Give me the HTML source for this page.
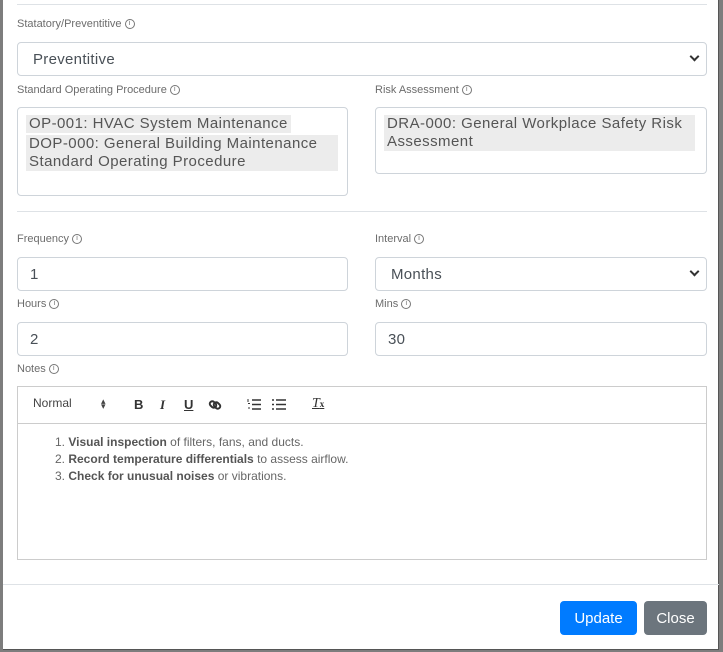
<!DOCTYPE html><html><head><style>
*{box-sizing:border-box;margin:0;padding:0}
body{width:723px;height:652px;background:#7d7d7d;position:relative;overflow:hidden;font-family:"Liberation Sans",sans-serif}
.m{position:absolute;left:3px;top:0;width:716px;height:650px;background:#fff;border-right:1px solid #555;border-bottom:1px solid #555}
.a{position:absolute}
.hr{position:absolute;height:1px;background:#dee2e6}
.lb{position:absolute;font-size:11px;color:#6c6c6c;display:flex;align-items:center}
.lb i{font-style:normal;display:inline-block;width:10px;height:10px;border:1px solid #777;border-radius:50%;font-size:7px;line-height:8px;text-align:center;margin-left:3px}
.in{position:absolute;border:1px solid #ced4da;border-radius:4px;font-size:15px;color:#495057;padding-left:12px;display:flex;align-items:center;letter-spacing:0.3px}
.chev{position:absolute;right:4px;top:11px;width:7px;height:7px;border-right:2px solid #333;border-bottom:2px solid #333;transform:rotate(45deg)}
.tag{background:#ececec;font-size:15px;color:#555;padding:0 3px;line-height:18px;display:inline-block;margin-bottom:2px;letter-spacing:0.45px}
.ed{font-size:12px;color:#666;line-height:17px}
.ed b{color:#555}
.btn{position:absolute;top:601px;height:34px;border-radius:4px;color:#fff;font-size:15px;display:flex;align-items:center;justify-content:center}
.tb{position:absolute;top:397px;font-size:13px;color:#333;font-weight:bold}
</style></head><body><div class="m">
<div class="hr" style="left:14px;top:4px;width:690px"></div>
<div class="lb" style="left:14px;top:18px">Statatory/Preventitive<i>i</i></div>
<div class="in" style="left:14px;top:42px;width:690px;height:34px;padding-left:15px">Preventitive<span class="chev" style="right:8px;top:10px"></span></div>
<div class="lb" style="left:14px;top:84px">Standard Operating Procedure<i>i</i></div>
<div class="in" style="left:14px;top:107px;width:331px;height:89px;display:block;padding:7px 8px">
<span class="tag">OP-001: HVAC System Maintenance</span><br><span class="tag" style="width:312px">DOP-000: General Building Maintenance Standard Operating Procedure</span></div>
<div class="lb" style="left:372px;top:84px">Risk Assessment<i>i</i></div>
<div class="in" style="left:372px;top:107px;width:332px;height:67px;display:block;padding:7px 8px">
<span class="tag" style="width:311px">DRA-000: General Workplace Safety Risk Assessment</span></div>
<div class="hr" style="left:14px;top:211px;width:690px"></div>
<div class="lb" style="left:14px;top:233px">Frequency<i>i</i></div>
<div class="in" style="left:14px;top:257px;width:331px;height:34px">1</div>
<div class="lb" style="left:372px;top:233px">Interval<i>i</i></div>
<div class="in" style="left:372px;top:257px;width:332px;height:34px;padding-left:15px">Months<span class="chev" style="right:8px;top:10px"></span></div>
<div class="lb" style="left:14px;top:298px">Hours<i>i</i></div>
<div class="in" style="left:14px;top:322px;width:331px;height:34px">2</div>
<div class="lb" style="left:372px;top:298px">Mins<i>i</i></div>
<div class="in" style="left:372px;top:322px;width:332px;height:34px">30</div>
<div class="lb" style="left:14px;top:363px">Notes<i>i</i></div>
<div class="a" style="left:14px;top:386px;width:690px;height:174px;border:1px solid #ccc"></div>
<div class="hr" style="left:14px;top:423px;width:690px;background:#ccc"></div>
<div class="a" style="left:30px;top:396px;font-size:12px;color:#444">Normal</div>
<div class="a" style="left:98px;top:399px;font-size:9px;color:#444;line-height:5px">▴<br>▾</div>
<div class="tb" style="left:131px">B</div>
<div class="tb" style="left:157px;font-style:italic;font-family:'Liberation Serif',serif">I</div>
<div class="tb" style="left:181px;text-decoration:underline">U</div>
<svg class="a" style="left:205px;top:398px" width="14" height="14"><g fill="none" stroke="#333" stroke-width="2"><rect x="1.5" y="4" width="7" height="5" rx="2.5" transform="rotate(45 5 6.5)"/><rect x="5.5" y="5" width="7" height="5" rx="2.5" transform="rotate(45 9 7.5)"/></g></svg>
<svg class="a" style="left:244px;top:398px" width="14" height="13"><path d="M5 2h9M5 6.5h9M5 11h9" stroke="#333" stroke-width="1.6"/><path d="M1 1v3M1 5.5h2M1 10h2" stroke="#333" stroke-width="1"/></svg>
<svg class="a" style="left:269px;top:398px" width="14" height="13"><path d="M4 2h10M4 6.5h10M4 11h10M0 2h2M0 6.5h2M0 11h2" stroke="#333" stroke-width="1.6"/></svg>
<div class="a" style="left:309px;top:396px;font-size:14px;color:#333;font-style:italic;text-decoration:underline;font-family:'Liberation Serif',serif">T<span style="font-size:9px;font-style:normal;font-weight:bold">x</span></div>
<div class="a ed" style="left:52px;top:434px">1. <b>Visual inspection</b> of filters, fans, and ducts.<br>2. <b>Record temperature differentials</b> to assess airflow.<br>3. <b>Check for unusual noises</b> or vibrations.</div>
<div class="hr" style="left:0;top:584px;width:716px"></div>
<div class="btn" style="left:557px;width:77px;background:#007bff">Update</div>
<div class="btn" style="left:641px;width:63px;background:#6c757d">Close</div>
</div></body></html>
